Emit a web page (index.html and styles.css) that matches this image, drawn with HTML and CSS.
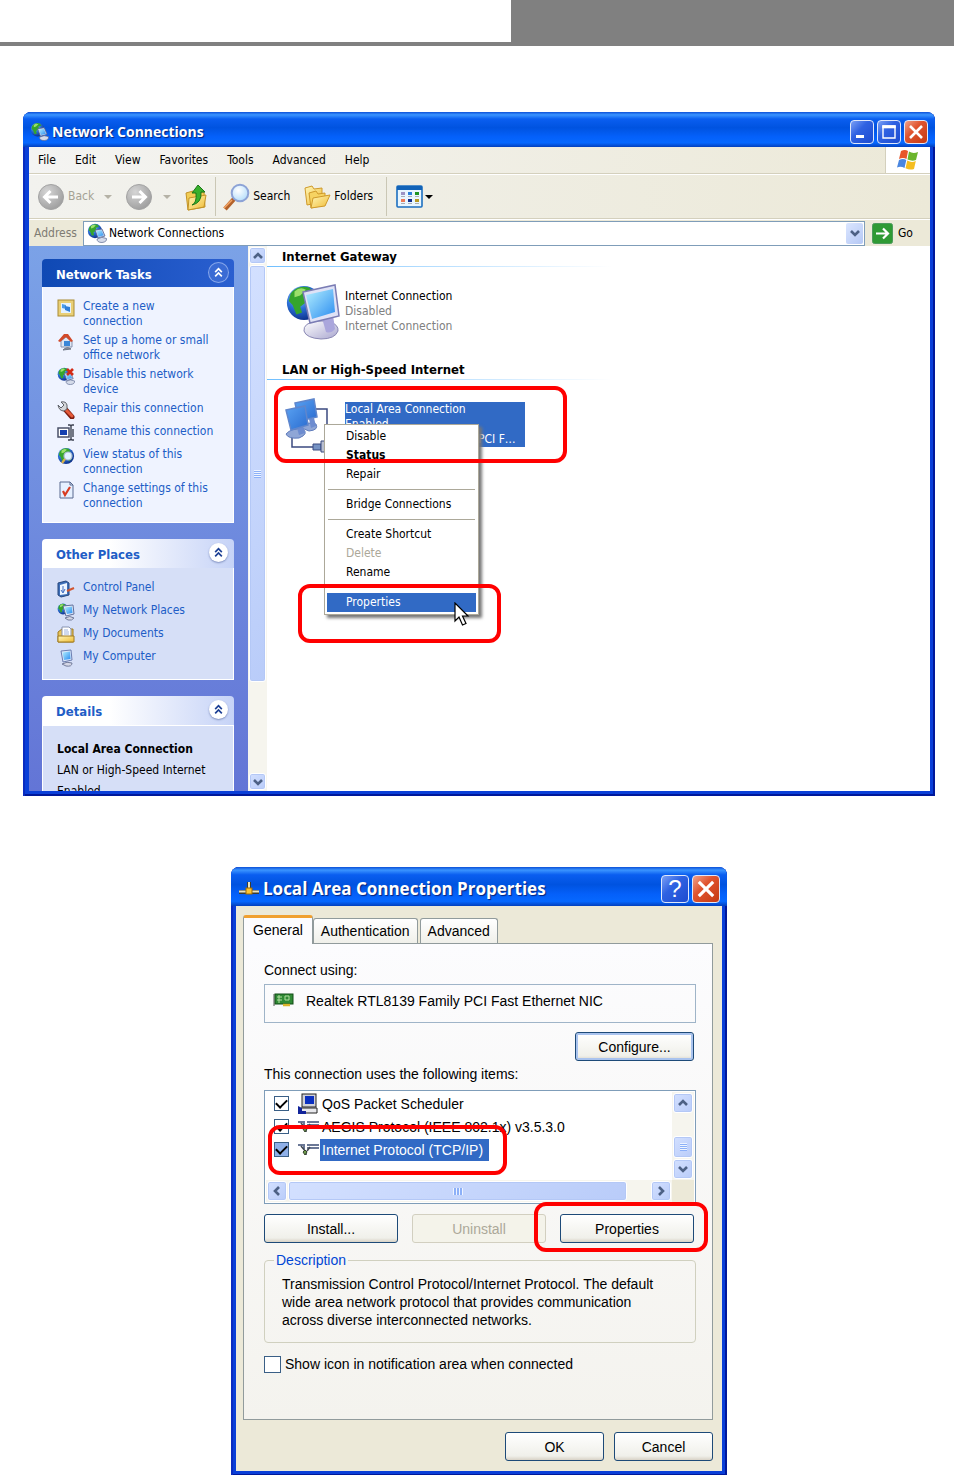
FILE: index.html
```
<!DOCTYPE html>
<html lang="en">
<head>
    <meta charset="UTF-8">
    <meta name="viewport" content="width=device-width, initial-scale=1.0">
    <title>Network Connections</title>
    <link rel="stylesheet" href="styles.css">
</head>
<body>
    <!-- Shared icon shapes -->
    <svg class="defs" width="0" height="0" aria-hidden="true">
        <defs>
            <radialGradient id="sea" cx="35%" cy="30%" r="75%">
                <stop offset="0" stop-color="#9fd0ff"/><stop offset=".5" stop-color="#2a6fd6"/><stop offset="1" stop-color="#0b2c86"/>
            </radialGradient>
            <linearGradient id="screen" x1="0" y1="0" x2="1" y2="1">
                <stop offset="0" stop-color="#b5f0ff"/><stop offset="1" stop-color="#2a8cf0"/>
            </linearGradient>
            <linearGradient id="screenDark" x1="0" y1="0" x2="1" y2="1">
                <stop offset="0" stop-color="#5aa2f2"/><stop offset="1" stop-color="#2a6cd0"/>
            </linearGradient>
            <linearGradient id="paper" x1="0" y1="0" x2="1" y2="1">
                <stop offset="0" stop-color="#fff7b8"/><stop offset="1" stop-color="#f0bb35"/>
            </linearGradient>
            <linearGradient id="stand" x1="0" y1="0" x2="1" y2="1">
                <stop offset="0" stop-color="#fff"/><stop offset="1" stop-color="#a9a6cf"/>
            </linearGradient>
            <radialGradient id="grey" cx="35%" cy="30%" r="80%">
                <stop offset="0" stop-color="#d5d5d5"/><stop offset="1" stop-color="#9a9a9a"/>
            </radialGradient>
            <radialGradient id="lens" cx="40%" cy="35%" r="70%">
                <stop offset="0" stop-color="#fff"/><stop offset="1" stop-color="#b2dcfa"/>
            </radialGradient>
        </defs>
        <symbol id="globe" viewBox="0 0 20 20">
            <circle cx="10" cy="10" r="9" fill="url(#sea)"/>
            <path d="M3 5Q7 0 13 2L15 5L11 6L12 9L8 12L9 15L6 16L4 11L2 9Z" fill="#35a52c"/>
            <path d="M5 4Q8 1 11 3L8 6L5 7Z" fill="#9be06a"/>
            <path d="M13 10L17 9L16 14L13 16Z" fill="#35a52c"/>
        </symbol>
        <symbol id="net" viewBox="0 0 20 20">
            <use href="#globe" x="0" y="0" width="16" height="16"/>
            <path d="M8 7L15 6L18 13L11 15Z" fill="#c8d6f0" stroke="#4f6090" stroke-width=".8"/>
            <path d="M9.300 8L14.500 7.200L16.700 12.300L11.500 13.700Z" fill="url(#screen)"/>
            <path d="M10 16Q15 13 19.500 15.500Q20 19 15 19.500Q10 19.500 10 16Z" fill="#d5dbea" stroke="#59678f" stroke-width=".7"/>
        </symbol>
        <symbol id="up2" viewBox="0 0 20 20">
            <path d="M6.500 9.500L10 6L13.500 9.500M6.500 14L10 10.500L13.500 14" fill="none" stroke="currentColor" stroke-width="1.800"/>
        </symbol>
        <symbol id="chev" viewBox="0 0 12 12">
            <path d="M2 8L6 4L10 8" fill="none" stroke="#4d6185" stroke-width="2.600"/>
        </symbol>
        <symbol id="cross" viewBox="0 0 20 20">
            <path d="M4 4L16 16M16 4L4 16" stroke="#fff" stroke-width="2.600"/>
        </symbol>
        <symbol id="plug" viewBox="0 0 22 18">
            <path d="M1 4H7V8M10 4H22M10 7H22" fill="none" stroke="#6b7896" stroke-width="2"/>
            <path d="M4 5L9 11L9 14M13 6L10 10" fill="none" stroke="#434a55" stroke-width="1.600"/>
            <path d="M6 11L8 9L10 11L8 14Z" fill="#6d9a4c" stroke="#35432a"/>
        </symbol>
    </svg>

    <header class="page-head">
        <div class="page-head-tab"></div>
    </header>

    <main class="page">
        <section class="window explorer">
            <div class="titlebar">
                <svg class="title-icon" viewBox="0 0 20 20"><use href="#net"/></svg>
                <h1>Network Connections</h1>
                <button class="cap" aria-label="Minimize"><svg viewBox="0 0 20 20"><rect x="4" y="13" width="8" height="3" fill="#fff"/></svg></button>
                <button class="cap" aria-label="Maximize"><svg viewBox="0 0 20 20"><path d="M4 4H16V16H4Z" fill="none" stroke="#fff" stroke-width="1.400"/><rect x="3.300" y="3.300" width="13.400" height="3" fill="#fff"/></svg></button>
                <button class="cap close" aria-label="Close"><svg viewBox="0 0 20 20"><use href="#cross"/></svg></button>
            </div>

            <div class="client">
                <div class="menubar">
                    <nav>
                        <button>File</button>
                        <button>Edit</button>
                        <button>View</button>
                        <button>Favorites</button>
                        <button>Tools</button>
                        <button>Advanced</button>
                        <button>Help</button>
                    </nav>
                    <div class="flag">
                        <svg width="24" height="22" viewBox="0 0 24 22">
                            <path d="M5 2Q9 0 12 2L10.500 10Q7 8 3 10Z" fill="#e8562a"/>
                            <path d="M13 2.500Q17 5 22 3L20 11Q16 12.500 11.500 10.500Z" fill="#6bb52c"/>
                            <path d="M3 11Q7 9 10.300 11L8.500 19Q5 17 1 18.500Z" fill="#4a86e0"/>
                            <path d="M11.300 11.500Q15.500 14 19.800 12L18 20Q14 21.500 9.500 19.300Z" fill="#f5bd1f"/>
                        </svg>
                    </div>
                </div>

                <div class="toolbar">
                    <button class="tool off">
                        <svg width="28" height="28" viewBox="0 0 28 28"><circle cx="14" cy="14" r="12.500" fill="url(#grey)" stroke="#a3a3a3"/><path d="M21 14H8M13.500 8L7.500 14L13.500 20" fill="none" stroke="#fff" stroke-width="3"/></svg>
                        Back
                    </button>
                    <span class="caret off"></span>
                    <button class="tool off" aria-label="Forward">
                        <svg width="28" height="28" viewBox="0 0 28 28"><circle cx="14" cy="14" r="12.500" fill="url(#grey)" stroke="#a3a3a3"/><path d="M7 14H20M14.500 8L20.500 14L14.500 20" fill="none" stroke="#fff" stroke-width="3"/></svg>
                    </button>
                    <span class="caret off"></span>
                    <button class="tool" aria-label="Up">
                        <svg width="24" height="28" viewBox="0 0 24 28">
                            <path d="M2 10L9 8L11 10L20 9L21 24L4 27Z" fill="#f2cd55" stroke="#c39327"/>
                            <path d="M5 15L22 12L20 24L4 27Z" fill="url(#paper)" stroke="#c39327"/>
                            <path d="M8 22Q13 20 12 10H8L14 2L21 9H17Q18 20 8 22Z" fill="#38b02c" stroke="#1b7717"/>
                        </svg>
                    </button>
                    <span class="sep"></span>
                    <button class="tool">
                        <svg width="28" height="28" viewBox="0 0 28 28">
                            <path d="M12 16L3 26" stroke="#b3622a" stroke-width="4.500"/>
                            <path d="M10 17L2 25" stroke="#f3a567" stroke-width="1.600"/>
                            <circle cx="18" cy="10" r="8.300" fill="url(#lens)" stroke="#8da3d6" stroke-width="2"/>
                        </svg>
                        Search
                    </button>
                    <button class="tool folders">
                        <svg width="28" height="28" viewBox="0 0 28 28">
                            <path d="M2 5L9 3L11 6L19 5V19L4 22Z" fill="url(#paper)" stroke="#cf9a2b"/>
                            <path d="M6 10L13 8L15 11L22 10V22L8 25Z" fill="#f6d362" stroke="#cf9a2b"/>
                            <path d="M10 15L27 12L22 23L8 25Z" fill="url(#paper)" stroke="#cf9a2b"/>
                        </svg>
                        Folders
                    </button>
                    <span class="sep"></span>
                    <button class="tool views" aria-label="Views">
                        <svg width="28" height="24" viewBox="0 0 28 24">
                            <rect x="1" y="1" width="25" height="21" rx="1" fill="#e9f6ff" stroke="#1c6fc0" stroke-width="1.600"/>
                            <rect x="1" y="1" width="25" height="4" fill="#1263b8"/>
                            <path d="M5 7h4v3H5z" fill="#9c93c4"/><path d="M12 7h4v3h-4z" fill="#2a7fd8"/><path d="M19 7h4v3h-4z" fill="#1d9424"/>
                            <path d="M5 14h4v3H5z" fill="#ee7b58"/><path d="M12 14h4v3h-4z" fill="#142f8e"/><path d="M19 14h4v3h-4z" fill="#b89a24"/>
                            <path d="M5 11.500h4M12 11.500h4M19 11.500h4M5 18.500h4M12 18.500h4M19 18.500h4" stroke="#a9aeb8"/>
                        </svg>
                    </button>
                    <span class="caret"></span>
                </div>

                <form class="address">
                    <label for="address">Address</label>
                    <div class="combo">
                        <svg width="20" height="20" viewBox="0 0 20 20"><use href="#net"/></svg>
                        <input id="address" type="text" value="Network Connections">
                        <button type="button" class="drop" aria-label="Show addresses"><svg class="down" width="12" height="12"><use href="#chev"/></svg></button>
                    </div>
                    <button type="button" class="go">
                        <svg width="21" height="21" viewBox="0 0 21 21"><rect x=".5" y=".5" width="20" height="20" rx="2" fill="#2f9a34" stroke="#4d9a5d"/><path d="M4 10.500H16M11 5.500L16 10.500L11 15.500" fill="none" stroke="#fff" stroke-width="2.200"/></svg>
                        Go
                    </button>
                </form>

                <div class="panes">
                    <aside class="tasks">
                        <section class="panel primary">
                            <h2>Network Tasks <button aria-label="Collapse Network Tasks"><svg viewBox="0 0 20 20"><use href="#up2"/></svg></button></h2>
                            <ul>
                                <li>
                                    <svg viewBox="0 0 18 18"><rect x="1" y="1" width="16" height="16" fill="#e9cf77" stroke="#a98b34"/><rect x="4" y="4" width="10" height="10" fill="#e4f2ff"/><path d="M5 5L9 6V10L5 9Z" fill="#4c9ce8"/><path d="M8 7L13 8V13L8 11Z" fill="#2f7ed8"/></svg>
                                    <a href="#">Create a new<br>connection</a>
                                </li>
                                <li>
                                    <svg viewBox="0 0 18 18"><path d="M4 8L9 4L15 8V14H4Z" fill="#dfe7f5" stroke="#8792ad"/><path d="M1 8L7 1L11 1L16 8L14 9L9 4L3 9Z" fill="#d1492a"/><rect x="7" y="8" width="6" height="5" fill="#3a86d8"/><path d="M6 17Q10 13 14 16Z" fill="#9097a5" stroke="#6d7485"/></svg>
                                    <a href="#">Set up a home or small<br>office network</a>
                                </li>
                                <li>
                                    <svg viewBox="0 0 18 18"><use href="#net" width="18" height="18"/><path d="M10 2L16 8M16 2L10 8" stroke="#d22a16" stroke-width="2.600"/></svg>
                                    <a href="#">Disable this network<br>device</a>
                                </li>
                                <li>
                                    <svg viewBox="0 0 18 18"><path d="M8 8L15 16" stroke="#7c1d10" stroke-width="5" stroke-linecap="round"/><path d="M8 8L15 15" stroke="#e65a3a" stroke-width="3" stroke-linecap="round"/><path d="M1 4L4 7L7 4L4 1Q9 0 10 4V8L7 10Q2 10 1 4Z" fill="#d4d6da" stroke="#5f6269"/></svg>
                                    <a href="#">Repair this connection</a>
                                </li>
                                <li>
                                    <svg viewBox="0 0 18 18"><rect x="1" y="4" width="11" height="9" fill="#fff" stroke="#4a5068" stroke-width="1.500"/><rect x="3" y="6" width="7" height="5" fill="#1440b0"/><path d="M11 1H13L14 2L15 1H17M14 2V15M11 16H13L14 15L15 16H17M16 5V13" fill="none" stroke="#3d4251" stroke-width="1.400"/></svg>
                                    <a href="#">Rename this connection</a>
                                </li>
                                <li>
                                    <svg viewBox="0 0 18 18"><use href="#globe" x="0" y="0" width="18" height="18"/><circle cx="11" cy="9" r="4" fill="#dff2ff" stroke="#aab8cf" stroke-width="1.200"/><path d="M8 12L5 16" stroke="#d8b14b" stroke-width="2.200"/></svg>
                                    <a href="#">View status of this<br>connection</a>
                                </li>
                                <li>
                                    <svg viewBox="0 0 18 18"><path d="M3 1H13L16 4V17H3Z" fill="#e6f0ff" stroke="#59698f"/><path d="M13 1V4H16" fill="none" stroke="#59698f"/><path d="M6 10L8 14L13 6" fill="none" stroke="#d83b20" stroke-width="2.200"/></svg>
                                    <a href="#">Change settings of this<br>connection</a>
                                </li>
                            </ul>
                        </section>

                        <section class="panel">
                            <h2>Other Places <button aria-label="Collapse Other Places"><svg viewBox="0 0 20 20"><use href="#up2"/></svg></button></h2>
                            <ul>
                                <li>
                                    <svg viewBox="0 0 18 18"><path d="M1 3L9 1L12 3V15L4 17L1 15Z" fill="#3e6fb8" stroke="#27477d"/><path d="M3 5L10 3V14L3 15Z" fill="#eef6ff"/><path d="M6 6V12M4 10L6 13L8 9" stroke="#3f6cc2" fill="none"/><path d="M10 11L17 8" stroke="#d2552f" stroke-width="2"/></svg>
                                    <a href="#">Control Panel</a>
                                </li>
                                <li>
                                    <svg viewBox="0 0 18 18"><use href="#globe" width="12" height="12"/><path d="M6 3L16 2L17 11L9 13Z" fill="#e6ecf8" stroke="#62709c"/><path d="M7.500 4.500L15 3.500L15.500 10L10 11Z" fill="url(#screen)"/><path d="M8 15Q13 12 17 15Q15 18 11 17Z" fill="#d5d7e6" stroke="#737c9c"/></svg>
                                    <a href="#">My Network Places</a>
                                </li>
                                <li>
                                    <svg viewBox="0 0 18 18"><path d="M1 6L5 3H16V16H1Z" fill="#e7c258" stroke="#9f7a21"/><path d="M5 1H12L14 3V12H5Z" fill="#fff" stroke="#8793b0"/><path d="M7 4H11M7 6H12M7 8H12" stroke="#9fb3dc"/><path d="M1 10H17V16H1Z" fill="url(#paper)" stroke="#9f7a21"/></svg>
                                    <a href="#">My Documents</a>
                                </li>
                                <li>
                                    <svg viewBox="0 0 18 18"><path d="M4 2L14 1L15 11L6 13Z" fill="#dbe7fa" stroke="#6b7db0"/><path d="M5.500 3.500L13 2.500L13.500 10L7 11Z" fill="url(#screen)"/><path d="M5 15Q10 12 15 14Q15 18 9 17Z" fill="#d5d7e6" stroke="#737c9c"/></svg>
                                    <a href="#">My Computer</a>
                                </li>
                            </ul>
                        </section>

                        <section class="panel">
                            <h2>Details <button aria-label="Collapse Details"><svg viewBox="0 0 20 20"><use href="#up2"/></svg></button></h2>
                            <div class="details">
                                <strong>Local Area Connection</strong>
                                <p>LAN or High-Speed Internet</p>
                                <p>Enabled</p>
                            </div>
                        </section>
                    </aside>

                    <div class="scroll vertical">
                        <button aria-label="Scroll up"><svg width="12" height="12"><use href="#chev"/></svg></button>
                        <div class="thumb tall"><span class="grip"></span></div>
                        <button class="last" aria-label="Scroll down"><svg class="down" width="12" height="12"><use href="#chev"/></svg></button>
                    </div>

                    <div class="content">
                        <h3>Internet Gateway</h3>
                        <div class="connection">
                            <svg width="56" height="58" viewBox="0 0 56 58">
                                <use href="#globe" x="0" y="0" width="38" height="38"/>
                                <path d="M19 47Q18 39 32 37L44 37Q54 41 53 47Q50 55 36 55Q21 54 19 47Z" fill="url(#stand)" stroke="#8a88b4"/>
                                <path d="M37 34L48 31L50 45Q46 50 41 48Z" fill="#aaa6dc"/>
                                <path d="M18 8L50 1L54 32L25 39Z" fill="#dfe2f6" stroke="#7a7cb4" stroke-width="1.500"/>
                                <path d="M21 11L48 5L50 28L27 35Z" fill="url(#screen)"/>
                            </svg>
                            <p>Internet Connection<br><span>Disabled</span><br><span>Internet Connection</span></p>
                        </div>
                        <h3>LAN or High-Speed Internet</h3>
                        <div class="connection">
                            <svg width="56" height="58" viewBox="0 0 56 58">
                                <path d="M30 12H42V30M7 38V50H34" fill="none" stroke="#3b4a80" stroke-width="1.500"/>
                                <path d="M28 47H36V53H28Z" fill="#7693c4" stroke="#3b4a80"/><path d="M36 44H44V55H36Z" fill="#b9bfd0" stroke="#3b4a80"/>
                                <path d="M14 30Q20 24 31 27Q34 33 24 34Z" fill="#8fa6d6" stroke="#5f7cbc"/>
                                <path d="M24 22L29 21L31 29L26 31Z" fill="#6d8cd0"/>
                                <path d="M10 6L29 2L32 20L14 24Z" fill="url(#screenDark)" stroke="#5f86cc" stroke-width="1.500"/>
                                <path d="M1 37Q6 31 18 32Q24 37 14 41Q3 42 1 37Z" fill="#8fa6d6" stroke="#5f7cbc"/>
                                <path d="M12 31L18 29L20 36L14 38Z" fill="#6d8cd0"/>
                                <path d="M1 13L20 9L23 28L6 33Z" fill="url(#screenDark)" stroke="#5f86cc" stroke-width="1.500"/>
                            </svg>
                            <p class="selected">Local Area Connection<br>Enabled<br><em>Realtek RTL8139 Family</em>PCI F…</p>
                        </div>

                        <!-- Right-click menu -->
                        <div class="context">
                            <button>Disable</button>
                            <button><b>Status</b></button>
                            <button>Repair</button>
                            <hr>
                            <button>Bridge Connections</button>
                            <hr>
                            <button>Create Shortcut</button>
                            <button disabled>Delete</button>
                            <button>Rename</button>
                            <hr>
                            <button class="active">Properties</button>
                        </div>
                        <div class="mark mark-connection"></div>
                        <div class="mark mark-menu"></div>
                        <svg class="cursor" width="16" height="26" viewBox="0 0 16 26"><path d="M1 1V19L5 15L8.500 23L12 21.500L8.500 14H14Z" fill="#fff" stroke="#000" stroke-width="1.200"/></svg>
                    </div>
                </div>
            </div>
        </section>

        <section class="window dialog">
            <div class="titlebar">
                <svg class="title-icon" viewBox="0 0 22 20"><path d="M1 13H21M11 3V11" stroke="#3d3d30" stroke-width="4"/><path d="M1 12.500H21M11 3V11" stroke="#e9e3c2" stroke-width="2"/><rect x="8" y="9" width="6" height="6" fill="#ffc42e" stroke="#9c6a08"/></svg>
                <h1>Local Area Connection Properties</h1>
                <button class="cap" aria-label="Help">?</button>
                <button class="cap close" aria-label="Close"><svg viewBox="0 0 20 20"><use href="#cross"/></svg></button>
            </div>

            <form class="client">
                <div class="tabs">
                    <button type="button" class="current">General</button>
                    <button type="button">Authentication</button>
                    <button type="button">Advanced</button>
                </div>

                <div class="sheet">
                    <p class="caption">Connect using:</p>
                    <div class="adapter">
                        <svg width="22" height="16" viewBox="0 0 22 16"><path d="M1 2V14" stroke="#8c8c8c" stroke-width="1.500"/><rect x="2" y="2" width="18" height="10" fill="#2f8a35" stroke="#124d17"/><path d="M4 5H9M4 8H9M6 3V11M12 4H16V8H12Z" stroke="#b3dfa0" fill="none"/><path d="M10 13H17" stroke="#dbb42c" stroke-width="2.500"/></svg>
                        Realtek RTL8139 Family PCI Fast Ethernet NIC
                    </div>
                    <button type="button" class="btn focus configure">Configure...</button>

                    <p class="caption">This connection uses the following items:</p>
                    <div class="listbox">
                        <div class="rows">
                            <label>
                                <input type="checkbox" checked>
                                <svg width="22" height="22" viewBox="0 0 22 22"><rect x="5" y="1" width="14" height="13" fill="#cfd0d8" stroke="#222"/><rect x="8" y="3" width="9" height="8" fill="#0a2fc0"/><path d="M4 15H20V20H4Z" fill="#e8e8ec" stroke="#222"/><path d="M1 13L5 15V21H1Z" fill="#12249a"/><path d="M1 18H9V21H1Z" fill="#12249a"/></svg>
                                <span>QoS Packet Scheduler</span>
                            </label>
                            <label>
                                <input type="checkbox" checked>
                                <svg width="22" height="18"><use href="#plug"/></svg>
                                <span>AEGIS Protocol (IEEE 802.1x) v3.5.3.0</span>
                            </label>
                            <label class="chosen">
                                <input type="checkbox" checked>
                                <svg width="22" height="18"><use href="#plug"/></svg>
                                <span>Internet Protocol (TCP/IP)</span>
                            </label>
                        </div>
                        <div class="scroll vertical">
                            <button type="button" aria-label="Scroll up"><svg width="12" height="12"><use href="#chev"/></svg></button>
                            <div class="thumb short"><span class="grip"></span></div>
                            <button type="button" aria-label="Scroll down"><svg class="down" width="12" height="12"><use href="#chev"/></svg></button>
                        </div>
                        <div class="scroll horizontal">
                            <button type="button" aria-label="Scroll left"><svg class="left" width="12" height="12"><use href="#chev"/></svg></button>
                            <div class="thumb wide"><span class="grip"></span></div>
                            <button type="button" class="last" aria-label="Scroll right"><svg class="right" width="12" height="12"><use href="#chev"/></svg></button>
                        </div>
                        <div class="mark mark-protocol"></div>
                    </div>

                    <div class="actions">
                        <button type="button" class="btn">Install...</button>
                        <button type="button" class="btn" disabled>Uninstall</button>
                        <button type="button" class="btn">Properties</button>
                        <div class="mark mark-properties"></div>
                    </div>

                    <fieldset>
                        <legend>Description</legend>
                        <p>Transmission Control Protocol/Internet Protocol. The default<br>wide area network protocol that provides communication<br>across diverse interconnected networks.</p>
                    </fieldset>

                    <label class="notify"><input type="checkbox"> Show icon in notification area when connected</label>
                </div>

                <div class="buttons">
                    <button type="button" class="btn">OK</button>
                    <button type="button" class="btn">Cancel</button>
                </div>
            </form>
        </section>
    </main>
</body>
</html>
```
FILE: styles.css
```
* {
    box-sizing: border-box;
}

body {
    margin: 0;
    background: #fff;
    color: #000;
    font-family: "DejaVu Sans Condensed", "DejaVu Sans", sans-serif;
    font-size: 12px;
    line-height: 15px;
}

button,
input {
    font: inherit;
    color: inherit;
}

button {
    padding: 0;
    border: none;
    background: none;
    white-space: nowrap;
}

h1, h2, h3, p, ul {
    margin: 0;
    padding: 0;
    list-style: none;
}

svg {
    display: block;
    flex: none;
}

.defs {
    position: absolute;
}

.down { transform: rotate(180deg); }
.left { transform: rotate(-90deg); }
.right { transform: rotate(90deg); }

/* Page header band */
.page-head {
    display: flex;
    justify-content: flex-end;
    height: 46px;
    border-bottom: 4px solid #808080;
}

.page-head-tab {
    width: 46.4%;
    background: #808080;
}

.page {
    padding: 66px 19px 0 23px;
}

/* Windows */
.window {
    background: #0a3fd8;
    border-radius: 8px 8px 0 0;
    box-shadow: inset 2px 0 #0a2cc0, inset -2px -2px #00189a;
}

.titlebar {
    display: flex;
    align-items: center;
    gap: 3px;
    height: 35px;
    padding: 4px 7px 0 7px;
    border-radius: 8px 8px 0 0;
    background: linear-gradient(#0c50d8, #3a94ff 8%, #0a5ef0 20%, #0053e0 45%, #0460fa 70%, #0668ff 88%, #0340bd);
    color: #fff;
}

.titlebar h1 {
    flex: 1;
    font-family: "Open Sans", "Noto Sans", sans-serif;
    font-size: 14px;
    font-weight: bold;
    text-shadow: 1px 1px 1px #06237c;
}

.title-icon {
    width: 19px;
    height: 19px;
}

.cap {
    display: grid;
    place-items: center;
    width: 24px;
    height: 24px;
    border: 1px solid #dfe8fb;
    border-radius: 4px;
    background: linear-gradient(135deg, #7ba0f5, #2f62e2 40%, #1c4bd0);
}

.cap svg {
    width: 20px;
    height: 20px;
}

.cap.close {
    background: linear-gradient(135deg, #f0a28a, #e0542f 40%, #c53a12);
}

.explorer .client {
    margin: 0 5px 0 6px;
}

.explorer {
    padding-bottom: 5px;
}

/* Menu bar */
.menubar {
    display: flex;
    height: 27px;
    border-bottom: 1px solid #d4d0bd;
    background: linear-gradient(to right, #f4f4f2, #ece9d8);
}

.menubar nav {
    display: flex;
    flex: 1;
    align-items: center;
    gap: 19px;
    padding-left: 9px;
}

.flag {
    display: grid;
    place-items: center;
    width: 45px;
    border-left: 1px solid #d4d0bd;
    background: #fff;
}

/* Toolbar */
.toolbar {
    display: flex;
    align-items: center;
    height: 45px;
    padding-left: 8px;
    border-top: 1px solid #fff;
    border-bottom: 1px solid #d4d0bd;
    background: linear-gradient(to right, #f2f2ee, #ece9d8);
}

.tool {
    display: flex;
    align-items: center;
    gap: 3px;
}

.off {
    color: #a5a294;
}

.folders {
    margin-left: 13px;
}

.caret {
    margin: 0 13px 0 10px;
    border: 4px solid transparent;
    border-top-color: currentColor;
    border-bottom: none;
}

.caret.off {
    border-top-color: #b5b2a6;
}

.views {
    margin-left: 3px;
}

.views + .caret {
    margin-left: 1px;
}

.sep {
    width: 1px;
    height: 39px;
    margin: 0 6px 0 7px;
    background: #cac7b5;
}

.folders + .sep {
    margin-left: 13px;
}

/* Address bar */
.address {
    display: flex;
    align-items: center;
    height: 27px;
    padding-left: 5px;
    border-top: 1px solid #fff;
    background: #ece9d8;
}

.address label {
    width: 49px;
    color: #7f7c73;
}

.combo {
    display: flex;
    flex: 1;
    align-items: center;
    height: 25px;
    padding: 0 1px 0 3px;
    border: 1px solid #7f9db9;
    background: #fff;
}

.combo input {
    flex: 1;
    min-width: 0;
    padding: 0 2px;
    border: none;
    outline: none;
    background: none;
}

.drop {
    display: grid;
    place-items: center;
    width: 17px;
    height: 21px;
    border-radius: 2px;
    background: linear-gradient(135deg, #dbe6ff, #b5c8f5);
}

.go {
    display: flex;
    align-items: center;
    gap: 5px;
    width: 65px;
    padding-left: 7px;
}

/* Panes */
.panes {
    display: flex;
    height: 545px;
    background: #fff;
}

.tasks {
    display: flex;
    flex: none;
    flex-direction: column;
    gap: 16px;
    width: 219px;
    padding: 13px 14px 0 13px;
    overflow: hidden;
    background: linear-gradient(#7ba2e7, #6375d6);
}

.panel {
    flex: none;
    color: #215dc6;
}

.panel h2 {
    display: flex;
    align-items: center;
    justify-content: space-between;
    height: 29px;
    padding: 2px 6px 0 14px;
    border-radius: 4px 4px 0 0;
    background: linear-gradient(to right, #fff 35%, #c6d3f7);
    font-size: 13px;
}

.panel h2 button {
    width: 19px;
    height: 19px;
    margin-bottom: 4px;
    border-radius: 50%;
    background: #fff;
    box-shadow: 0 1px 2px #7f8fbf;
    color: #1c3f94;
}

.primary h2 {
    height: 28px;
    background: linear-gradient(to right, #0f49b4, #2a5fd0);
    color: #fff;
}

.primary h2 button {
    background: #3a6bd4;
    box-shadow: 0 0 0 1px #86a6ea;
    color: #fff;
}

.panel ul {
    display: flex;
    flex-direction: column;
    gap: 4px;
    padding: 12px 14px 11px;
    border: 1px solid #fff;
    border-top: none;
    background: #d6dff7;
}

.panel.primary ul {
    background: #eff3ff;
}

.panel li {
    display: flex;
    gap: 8px;
    min-height: 19px;
}

.panel li svg {
    width: 18px;
    height: 18px;
}

.panel a {
    color: inherit;
    text-decoration: none;
    white-space: nowrap;
}

.details {
    padding: 13px 14px;
    border: 1px solid #fff;
    background: #d6dff7;
    color: #000;
    line-height: 21px;
    white-space: nowrap;
}

/* Scroll bars */
.scroll {
    display: flex;
    gap: 1px;
    background: #f6f5ee;
}

.scroll.vertical {
    flex-direction: column;
    width: 19px;
    padding: 1px;
}

.scroll button,
.thumb {
    display: grid;
    flex: none;
    place-items: center;
    border: 1px solid #fff;
    border-radius: 3px;
    background: linear-gradient(135deg, #d3e0ff, #b9ccf9);
    box-shadow: inset 0 0 0 1px #b4c8f6;
}

.scroll button {
    height: 17px;
}

.scroll .last {
    margin-top: auto;
}

.tall {
    height: 417px;
}

.grip {
    width: 7px;
    height: 8px;
    background: repeating-linear-gradient(#eef4ff 0 1px, #8cb0f8 1px 2px);
}

/* Connection list */
.content {
    position: relative;
    flex: 1;
    min-width: 0;
}

.content h3 {
    height: 21px;
    padding: 3px 0 0 15px;
    border-bottom: 1px solid;
    border-image: linear-gradient(to right, #70bfff, #fff 52%) 1;
    font-size: 13px;
}

.connection {
    display: flex;
    gap: 4px;
    height: 92px;
    padding: 17px 0 0 18px;
}

.connection p {
    align-self: flex-start;
    margin-top: 5px;
    white-space: nowrap;
}

.connection span {
    color: #808080;
}

.connection .selected {
    width: 180px;
    overflow: hidden;
    background: #316ac5;
    color: #fff;
}

.selected em {
    display: inline-block;
    width: 133px;
    overflow: hidden;
    font-style: normal;
    vertical-align: top;
}

/* Context menu */
.context {
    position: absolute;
    top: 178px;
    left: 57px;
    width: 155px;
    padding: 2px;
    border: 1px solid #aca899;
    background: #fff;
    box-shadow: 3px 3px 3px #777;
}

.context button {
    display: block;
    width: 100%;
    height: 19px;
    padding-left: 19px;
    text-align: left;
}

.context hr {
    height: 1px;
    margin: 5px 1px;
    border: none;
    background: #aca899;
}

.context button:disabled {
    color: #aca899;
}

.context .active {
    background: #316ac5;
    color: #fff;
}

.cursor {
    position: absolute;
    top: 356px;
    left: 187px;
}

/* Red callouts */
.mark {
    position: absolute;
    border: 4px solid #f00;
    border-radius: 12px;
    pointer-events: none;
}

.mark-connection {
    top: 140px;
    left: 7px;
    width: 293px;
    height: 77px;
}

.mark-menu {
    top: 338px;
    left: 31px;
    width: 203px;
    height: 59px;
}

.mark-protocol {
    top: 34px;
    left: 3px;
    width: 239px;
    height: 50px;
}

.mark-properties {
    top: -12px;
    right: -12px;
    width: 174px;
    height: 50px;
}

/* Properties dialog */
.dialog {
    max-width: 496px;
    margin: 71px auto 0;
    padding-bottom: 5px;
    font-family: "Liberation Sans", Arial, sans-serif;
    font-size: 14px;
    line-height: 18px;
}

.dialog .titlebar {
    height: 39px;
}

.dialog .titlebar h1 {
    font-size: 17px;
}

.dialog .title-icon {
    width: 22px;
    height: 20px;
}

.dialog .cap {
    width: 28px;
    height: 28px;
    font-size: 24px;
}

.dialog .cap svg {
    width: 24px;
    height: 24px;
}

.dialog .client {
    margin: 0 5px;
    padding: 9px 9px 10px 7px;
    background: #ece9d8;
}

.tabs {
    display: flex;
    align-items: flex-end;
    height: 28px;
}

.tabs button {
    height: 25px;
    margin-right: 2px;
    padding: 0 7px;
    border: 1px solid #919b9c;
    border-bottom: none;
    border-radius: 3px 3px 0 0;
    background: linear-gradient(#fff, #f0f0ea);
}

.tabs .current {
    height: 29px;
    margin: 0 0 -1px;
    padding: 0 9px 3px;
    border-top: 3px solid #f0a030;
    background: #fcfcfe;
    z-index: 1;
}

.sheet {
    padding: 17px 16px 46px 20px;
    border: 1px solid #919b9c;
    background: linear-gradient(#fcfcfe, #f4f3ee);
}

.adapter {
    display: flex;
    gap: 11px;
    height: 39px;
    margin: 5px 0 9px;
    padding: 7px 8px;
    border: 1px solid #9fb4c8;
}

.btn {
    height: 29px;
    border: 1px solid #1d4a78;
    border-radius: 3px;
    background: linear-gradient(#fff, #f0f0ea 85%, #d8d2c6);
}

.btn:disabled {
    border-color: #d2cfc0;
    background: #f4f3ea;
    color: #aca899;
}

.focus {
    box-shadow: inset 0 0 0 2px #a9c3ee;
}

.configure {
    display: block;
    width: 119px;
    margin: 0 2px 4px auto;
}

.listbox {
    position: relative;
    display: grid;
    grid-template-columns: 1fr 22px;
    grid-template-rows: 88px 22px;
    margin: 7px 0 10px;
    padding: 1px;
    border: 1px solid #7f9db9;
    background: #fff;
}

/* corner between the two scroll bars */
.listbox::after {
    content: "";
    background: #ece9d8;
}

.rows label {
    display: flex;
    align-items: center;
    height: 23px;
    padding-left: 8px;
}

.rows svg {
    margin: 0 1px 0 8px;
}

.rows span {
    padding: 2px;
    height: 22px;
    white-space: nowrap;
}

.chosen span {
    padding-right: 6px;
    background: #316ac5;
    color: #fff;
}

input[type="checkbox"] {
    display: grid;
    flex: none;
    place-items: center;
    width: 15px;
    height: 15px;
    margin: 0;
    border: 1px solid #3a5f86;
    background: #fff;
    appearance: none;
}

input[type="checkbox"]:checked::after {
    content: "";
    width: 9px;
    height: 5px;
    margin-bottom: 3px;
    border: solid #000;
    border-width: 0 0 2px 2px;
    transform: rotate(-45deg);
}

.rows .chosen input {
    background: #8fb0e8;
}

.listbox .vertical {
    width: 22px;
}

.listbox .scroll button {
    height: 20px;
}

.short {
    height: 22px;
    margin-top: auto;
}

.listbox .horizontal {
    padding: 1px;
}

.horizontal button {
    width: 20px;
}

.listbox .horizontal .last {
    margin: 0 0 0 auto;
}

.wide {
    width: 84%;
}

.horizontal .grip {
    width: 10px;
    height: 7px;
    background: repeating-linear-gradient(to right, #eef4ff 0 1px, #8cb0f8 1px 3px);
}

.actions {
    position: relative;
    display: grid;
    grid-template-columns: repeat(3, 1fr);
    gap: 14px;
    padding-right: 2px;
}

fieldset {
    margin: 8px 0 12px;
    padding: 6px 17px 13px;
    border: 1px solid #d0d0bf;
    border-radius: 4px;
}

legend {
    margin-left: -8px;
    padding: 0 2px;
    color: #0046d5;
}

fieldset p {
    white-space: nowrap;
}

.notify {
    display: flex;
    align-items: center;
    gap: 4px;
}

.notify input[type="checkbox"] {
    width: 17px;
    height: 17px;
}

.buttons {
    display: flex;
    justify-content: flex-end;
    gap: 10px;
    padding-top: 12px;
}

.buttons .btn {
    width: 99px;
}
```
